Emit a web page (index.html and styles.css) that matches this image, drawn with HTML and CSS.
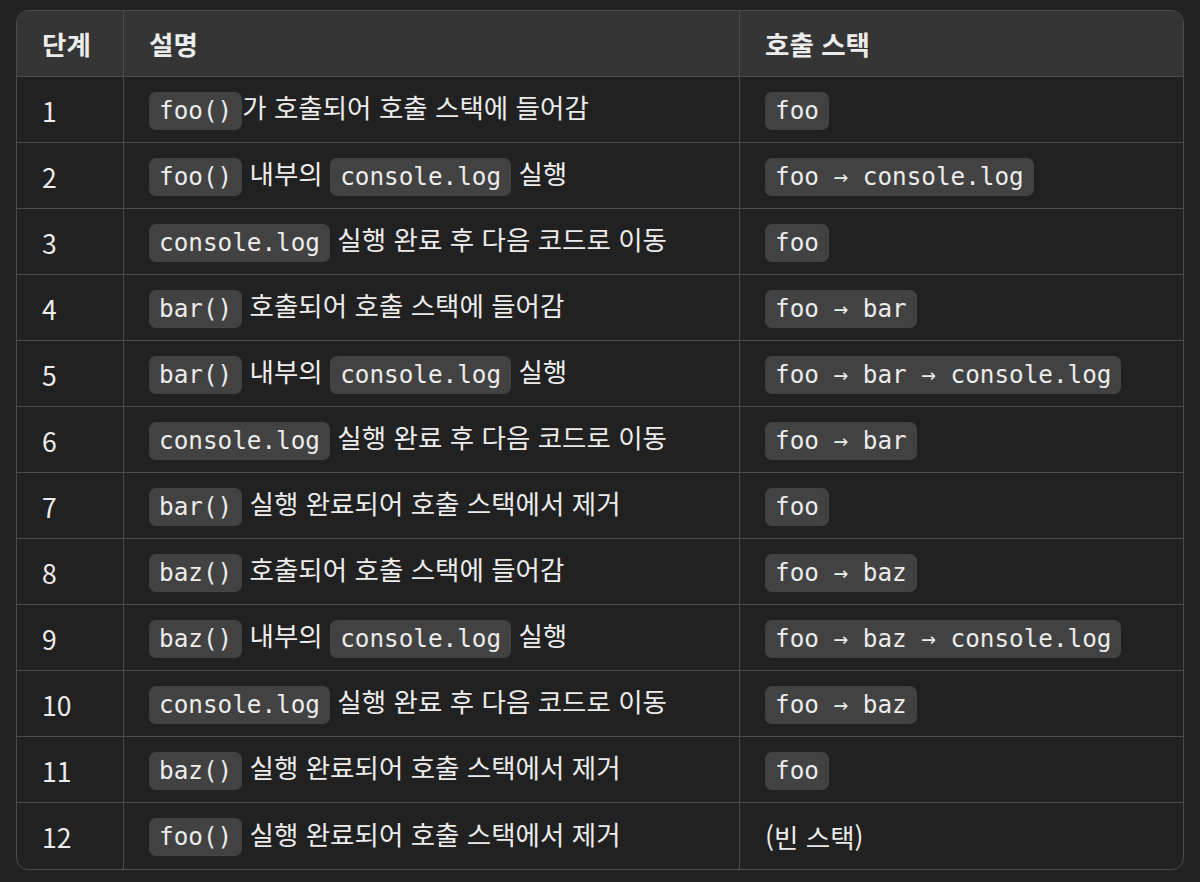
FILE: index.html
```html
<!DOCTYPE html>
<html lang="ko">
<head>
<meta charset="utf-8">
<link rel="stylesheet" href="styles.css">
</head>
<body>
<div class="wrap">
<table class="steps">
  <colgroup>
    <col class="c1"><col class="c2"><col class="c3">
  </colgroup>
  <thead>
    <tr><th>단계</th><th>설명</th><th>호출 스택</th></tr>
  </thead>
  <tbody>
    <tr><td>1</td><td><code>foo()</code>가 호출되어 호출 스택에 들어감</td><td><code>foo</code></td></tr>
    <tr><td>2</td><td><code>foo()</code> 내부의 <code>console.log</code> 실행</td><td><code>foo → console.log</code></td></tr>
    <tr><td>3</td><td><code>console.log</code> 실행 완료 후 다음 코드로 이동</td><td><code>foo</code></td></tr>
    <tr><td>4</td><td><code>bar()</code> 호출되어 호출 스택에 들어감</td><td><code>foo → bar</code></td></tr>
    <tr><td>5</td><td><code>bar()</code> 내부의 <code>console.log</code> 실행</td><td><code>foo → bar → console.log</code></td></tr>
    <tr><td>6</td><td><code>console.log</code> 실행 완료 후 다음 코드로 이동</td><td><code>foo → bar</code></td></tr>
    <tr><td>7</td><td><code>bar()</code> 실행 완료되어 호출 스택에서 제거</td><td><code>foo</code></td></tr>
    <tr><td>8</td><td><code>baz()</code> 호출되어 호출 스택에 들어감</td><td><code>foo → baz</code></td></tr>
    <tr><td>9</td><td><code>baz()</code> 내부의 <code>console.log</code> 실행</td><td><code>foo → baz → console.log</code></td></tr>
    <tr><td>10</td><td><code>console.log</code> 실행 완료 후 다음 코드로 이동</td><td><code>foo → baz</code></td></tr>
    <tr><td>11</td><td><code>baz()</code> 실행 완료되어 호출 스택에서 제거</td><td><code>foo</code></td></tr>
    <tr><td>12</td><td><code>foo()</code> 실행 완료되어 호출 스택에서 제거</td><td>(빈 스택)</td></tr>
  </tbody>
</table>
</div>
</body>
</html>
```
FILE: styles.css
```css
html, body {
  margin: 0;
  padding: 0;
  background: #212121;
}
.wrap {
  padding: 10px 16px 0 16px;
}
.steps {
  width: 1168px;
  table-layout: fixed;
  border-collapse: separate;
  border-spacing: 0;
  border: 1px solid #4c4c4c;
  border-radius: 12px;
  overflow: hidden;
  font-family: "Noto Sans CJK KR", "Noto Sans", sans-serif;
  font-size: 26.5px;
  color: #ececec;
}
.c1 { width: 107px; }
.c2 { width: 616px; }
.c3 { width: auto; }
.steps th, .steps td {
  height: 66px;
  box-sizing: border-box;
  padding: 0 24px 0 25px;
  text-align: left;
  vertical-align: middle;
  border-right: 1px solid #4c4c4c;
  border-bottom: 1px solid #4c4c4c;
  line-height: 32px;
  white-space: nowrap;
}
.steps th:last-child, .steps td:last-child { border-right: 0; }
.steps tbody tr:last-child td { border-bottom: 0; }
.steps th {
  background: #353535;
  font-weight: 600;
}
.steps td { padding-top: 2px; }
.steps code {
  display: inline-block;
  font-family: "DejaVu Sans Mono", monospace;
  font-size: 24.3px;
  line-height: 28px;
  padding: 5px 10px;
  border-radius: 7px;
  background: #424242;
  color: #ececec;
  vertical-align: middle;
}
```
